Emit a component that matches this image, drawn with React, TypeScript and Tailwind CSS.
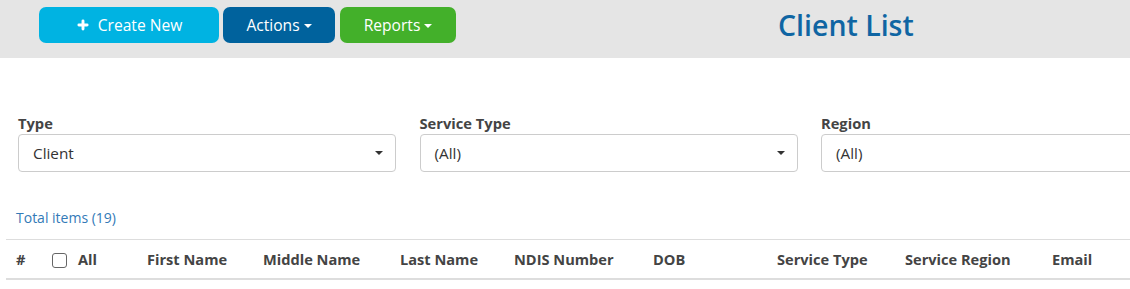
import { Plus } from "lucide-react";

const columns = [
    { label: "First Name", w: "w-[116px]" },
    { label: "Middle Name", w: "w-[137px]" },
    { label: "Last Name", w: "w-[114px]" },
    { label: "NDIS Number", w: "w-[139px]" },
    { label: "DOB", w: "w-[124px]" },
    { label: "Service Type", w: "w-[128px]" },
    { label: "Service Region", w: "w-[147px]" },
    { label: "Email", w: "w-[70px]" },
];

export default function App() {
    return (
        <div className="w-[1130px] h-[289px] overflow-hidden bg-white font-['Open_Sans',sans-serif] text-[#333]">
            {/* Toolbar */}
            <div className="h-[58px] bg-[#e5e5e5] flex items-start pt-[7px] pl-[39px]">
                <button className="h-[36px] w-[180px] rounded-[7px] bg-[#00b3e2] text-white text-[15.6px] flex items-center justify-center gap-[8px] pt-[2px]">
                    <Plus className="w-[14px] h-[14px] -mt-[2px]" strokeWidth={5} />
                    Create New
                </button>
                <DropButton label="Actions" className="ml-[4px] w-[112px] bg-[#00629d]" />
                <DropButton label="Reports" className="ml-[5px] w-[116px] bg-[#43b02a]" />
                <h1 className="ml-[322px] mt-[-2px] text-[28.5px] font-semibold text-[#0f65a3] leading-[40px]">Client List</h1>
            </div>

            {/* Filters */}
            <div className="flex gap-[23.5px] pl-[18px] pt-[55px]">
                <Filter label="Type" value="Client" />
                <Filter label="Service Type" value="(All)" />
                <Filter label="Region" value="(All)" wide />
            </div>

            <div className="pl-[16px] pt-[36px] text-[14px] text-[#337ab7] leading-[20px]">Total items (19)</div>

            {/* Table header */}
            <div className="ml-[6px] mt-[11px] border-t border-[#ddd] border-b-2 border-b-[#ddd] h-[41px] flex items-center pt-[2px] text-[14.6px] font-bold text-[#444]">
                <div className="w-[36px] pl-[10px]">#</div>
                <div className="w-[105px] flex items-center">
                    <span className="ml-[10px] w-[15px] h-[15px] border border-[#666] rounded-[3px] bg-white mt-[2px]" />
                    <span className="ml-[11px]">All</span>
                </div>
                {columns.map((c) => (
                    <div key={c.label} className={`${c.w} shrink-0`}>{c.label}</div>
                ))}
            </div>
        </div>
    );
}

function DropButton({ label, className }: { label: string; className: string }) {
    return (
        <button className={`h-[36px] rounded-[7px] text-white text-[15.6px] flex items-center justify-center gap-[4px] pt-[2px] ${className}`}>
            {label}
            <span className="w-0 h-0 border-l-[4px] border-r-[4px] border-t-[4px] border-l-transparent border-r-transparent border-t-white" />
        </button>
    );
}

function Filter({ label, value, wide }: { label: string; value: string; wide?: boolean }) {
    return (
        <div className="w-[378px] shrink-0">
            <div className="text-[14.7px] font-bold text-[#444] leading-[21px]">{label}</div>
            <div className="h-[38px] border border-[#ccc] rounded-[4px] flex items-center justify-between pl-[14px] pr-[12px] text-[15.3px] text-[#333]">
                <span>{value}</span>
                {!wide && (
                    <span className="w-0 h-0 border-l-[4px] border-r-[4px] border-t-[4px] border-l-transparent border-r-transparent border-t-[#333]" />
                )}
            </div>
        </div>
    );
}
